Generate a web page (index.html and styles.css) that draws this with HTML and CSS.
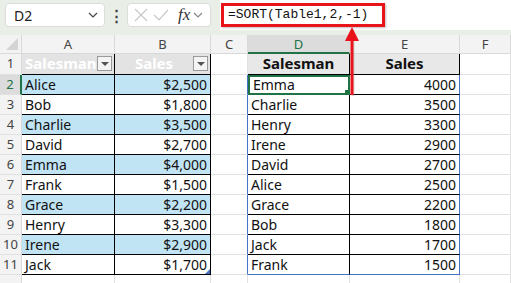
FILE: index.html
```html
<!DOCTYPE html>
<html lang="en">

<head>
    <meta charset="UTF-8">
    <title>SORT formula</title>
    <link rel="stylesheet" href="styles.css">
</head>

<body>
    <div class="app">
        <!-- Formula bar -->
        <div class="toolbar">
            <div class="name-box">
                <span>D2</span>
                <svg width="10" height="6" viewBox="0 0 10 6"><path d="M1 1 L5 5 L9 1" fill="none" stroke="#444" stroke-width="1.2"/></svg>
            </div>
            <div class="dots">⋮</div>
            <div class="fx-box">
                <svg width="16" height="16" viewBox="0 0 16 16"><path d="M2 2 L14 14 M14 2 L2 14" stroke="#c8c8c8" stroke-width="1.2"/></svg>
                <svg width="18" height="16" viewBox="0 0 18 16"><path d="M2 8 L7 13 L16 3" fill="none" stroke="#c8c8c8" stroke-width="1.2"/></svg>
                <span class="fx">fx</span>
                <svg width="10" height="6" viewBox="0 0 10 6"><path d="M1 1 L5 5 L9 1" fill="none" stroke="#888" stroke-width="1.2"/></svg>
            </div>
            <div class="formula">
                <div class="formula-text">=SORT(Table1,2,-1)</div>
            </div>
        </div>

        <!-- Sheet -->
        <div class="sheet">
            <div class="hd corner"><span class="tri"></span></div>
            <div class="hd">A</div>
            <div class="hd">B</div>
            <div class="hd">C</div>
            <div class="hd sel">D</div>
            <div class="hd">E</div>
            <div class="hd">F</div>

            <div class="rh">1</div>
            <div class="c t1h">Salesman<span class="filter"></span></div>
            <div class="c t1h tb center">Sales<span class="filter"></span></div>
            <div class="c"></div>
            <div class="c t2h">Salesman</div>
            <div class="c t2h">Sales</div>
            <div class="c"></div>

            <div class="rh sel">2</div>
            <div class="c tb band">Alice</div>
            <div class="c tb band num">$2,500</div>
            <div class="c bl"></div>
            <div class="c tb active">Emma</div>
            <div class="c tb br num">4000</div>
            <div class="c"></div>

            <div class="rh">3</div>
            <div class="c tb">Bob</div>
            <div class="c tb num">$1,800</div>
            <div class="c bl"></div>
            <div class="c tb">Charlie</div>
            <div class="c tb br num">3500</div>
            <div class="c"></div>

            <div class="rh">4</div>
            <div class="c tb band">Charlie</div>
            <div class="c tb band num">$3,500</div>
            <div class="c bl"></div>
            <div class="c tb">Henry</div>
            <div class="c tb br num">3300</div>
            <div class="c"></div>

            <div class="rh">5</div>
            <div class="c tb">David</div>
            <div class="c tb num">$2,700</div>
            <div class="c bl"></div>
            <div class="c tb">Irene</div>
            <div class="c tb br num">2900</div>
            <div class="c"></div>

            <div class="rh">6</div>
            <div class="c tb band">Emma</div>
            <div class="c tb band num">$4,000</div>
            <div class="c bl"></div>
            <div class="c tb">David</div>
            <div class="c tb br num">2700</div>
            <div class="c"></div>

            <div class="rh">7</div>
            <div class="c tb">Frank</div>
            <div class="c tb num">$1,500</div>
            <div class="c bl"></div>
            <div class="c tb">Alice</div>
            <div class="c tb br num">2500</div>
            <div class="c"></div>

            <div class="rh">8</div>
            <div class="c tb band">Grace</div>
            <div class="c tb band num">$2,200</div>
            <div class="c bl"></div>
            <div class="c tb">Grace</div>
            <div class="c tb br num">2200</div>
            <div class="c"></div>

            <div class="rh">9</div>
            <div class="c tb">Henry</div>
            <div class="c tb num">$3,300</div>
            <div class="c bl"></div>
            <div class="c tb">Bob</div>
            <div class="c tb br num">1800</div>
            <div class="c"></div>

            <div class="rh">10</div>
            <div class="c tb band">Irene</div>
            <div class="c tb band num">$2,900</div>
            <div class="c bl"></div>
            <div class="c tb">Jack</div>
            <div class="c tb br num">1700</div>
            <div class="c"></div>

            <div class="rh">11</div>
            <div class="c tb">Jack</div>
            <div class="c tb num corner-mark">$1,700</div>
            <div class="c bl"></div>
            <div class="c tb bb">Frank</div>
            <div class="c tb br bb num">1500</div>
            <div class="c"></div>

            <div class="rh"></div>
            <div class="c"></div>
            <div class="c"></div>
            <div class="c"></div>
            <div class="c"></div>
            <div class="c"></div>
            <div class="c"></div>
        </div>

        <!-- Arrow pointing to the formula -->
        <svg class="arrow" width="20" height="72" viewBox="0 0 20 72">
            <path d="M11 14 L11 70" stroke="#9b8f8f" stroke-width="3" opacity="0.35"/>
            <path d="M10 13 L10 69" stroke="#e8141a" stroke-width="3"/>
            <path d="M10 1 L17 15 L3 15 Z" fill="#e8141a"/>
        </svg>
    </div>
</body>

</html>
```

FILE: styles.css
```css
body {
    margin: 0;
    font-family: "Noto Sans", "Liberation Sans", sans-serif;
    background: #ffffff;
    overflow: hidden;
}

.app {
    position: relative;
    width: 511px;
    height: 283px;
    overflow: hidden;
}

/* Formula bar */
.toolbar {
    height: 35px;
    background: #e9efe7;
    display: flex;
    align-items: flex-start;
    box-sizing: border-box;
    padding-top: 3px;
}

.name-box {
    margin-left: 5px;
    width: 100px;
    height: 24px;
    box-sizing: border-box;
    background: #fff;
    border: 1px solid #dcdcdc;
    border-radius: 4px;
    display: flex;
    align-items: center;
    justify-content: space-between;
    padding: 0 6px 0 8px;
    font-size: 14px;
    color: #222;
}

.dots {
    width: 22px;
    text-align: center;
    font-size: 15px;
    font-weight: bold;
    color: #444;
    line-height: 24px;
}

.fx-box {
    width: 84px;
    height: 24px;
    box-sizing: border-box;
    background: #fff;
    border: 1px solid #dcdcdc;
    border-radius: 4px;
    display: flex;
    align-items: center;
    gap: 3px;
    padding-left: 5px;
}

.fx {
    font-family: "Liberation Serif", serif;
    font-style: italic;
    font-size: 17px;
    color: #333;
    margin-left: 5px;
}

.formula {
    flex: 1;
    height: 30px;
    margin-left: 9px;
    margin-top: -3px;
    background: #fff;
    display: flex;
    align-items: center;
}

.formula-text {
    border: 3px solid #e8141a;
    height: 24px;
    box-sizing: border-box;
    width: 164px;
    margin-left: 1px;
    padding-left: 4px;
    font-family: "Liberation Mono", monospace;
    font-size: 13px;
    line-height: 18px;
    color: #111;
    box-shadow: 1px 1px 2px rgba(0, 0, 0, 0.25);
}

/* Sheet grid */
.sheet {
    display: grid;
    grid-template-columns: 22px 93px 96px 37px 102px 110px 1fr;
    grid-template-rows: 19px 21px repeat(10, 20px) 20px;
    font-size: 14px;
    color: #111;
}

.hd {
    background: #f3f3f3;
    border-right: 1px solid #d9d9d9;
    border-bottom: 1px solid #d9d9d9;
    color: #444;
    font-size: 13px;
    text-align: center;
    line-height: 18px;
}

.hd.sel {
    background: #dcdcdc;
    color: #217346;
    border-bottom: 2px solid #217346;
}

.corner {
    position: relative;
}

.tri {
    position: absolute;
    right: 3px;
    bottom: 3px;
    width: 0;
    height: 0;
    border-left: 12px solid transparent;
    border-bottom: 12px solid #d4d4d4;
}

.rh {
    background: #f3f3f3;
    border-right: 1px solid #d9d9d9;
    border-bottom: 1px solid #e1e1e1;
    color: #444;
    font-size: 13px;
    text-align: center;
    line-height: 19px;
}

.rh.sel {
    color: #217346;
    background: #dcdcdc;
    border-right: 2px solid #217346;
}

.c {
    border-right: 1px solid #e1e1e1;
    border-bottom: 1px solid #e1e1e1;
    padding: 0 3px;
    line-height: 19px;
    white-space: nowrap;
    overflow: hidden;
    position: relative;
}

.tb {
    border-right-color: #000;
    border-bottom-color: #000;
}

.band {
    background: #c1e4f5;
}

.num {
    text-align: right;
}

.bl {
    border-right-color: #4472c4;
}

.br {
    border-right-color: #4472c4;
}

.bb {
    border-bottom-color: #4472c4;
}

/* Table1 header: white text on grey */
.t1h {
    background: #e3e3e3;
    color: #fff;
    font-weight: bold;
    font-size: 15px;
    text-align: center;
    padding-right: 20px;
    border-right-color: #000;
    border-bottom-color: #000;
}

.filter {
    position: absolute;
    right: 2px;
    top: 2px;
    width: 15px;
    height: 15px;
    box-sizing: border-box;
    background: #f4f4f4;
    border: 1px solid #9a9a9a;
}

.filter::after {
    content: "";
    position: absolute;
    left: 3px;
    top: 5px;
    border-left: 4px solid transparent;
    border-right: 4px solid transparent;
    border-top: 4px solid #555;
}

/* SORT result header */
.t2h {
    background: #e8e8e8;
    font-weight: bold;
    font-size: 15px;
    text-align: center;
    border-right-color: #000;
    border-bottom-color: #000;
}

.active {
    outline: 2px solid #217346;
    outline-offset: -2px;
    padding-left: 5px;
}

.active::after {
    content: "";
    position: absolute;
    right: -1px;
    bottom: -1px;
    width: 5px;
    height: 5px;
    background: #217346;
}

.corner-mark::after {
    content: "";
    position: absolute;
    right: 0;
    bottom: 0;
    border-left: 5px solid transparent;
    border-bottom: 5px solid #4472c4;
}

.arrow {
    position: absolute;
    left: 342px;
    top: 26px;
}
```
